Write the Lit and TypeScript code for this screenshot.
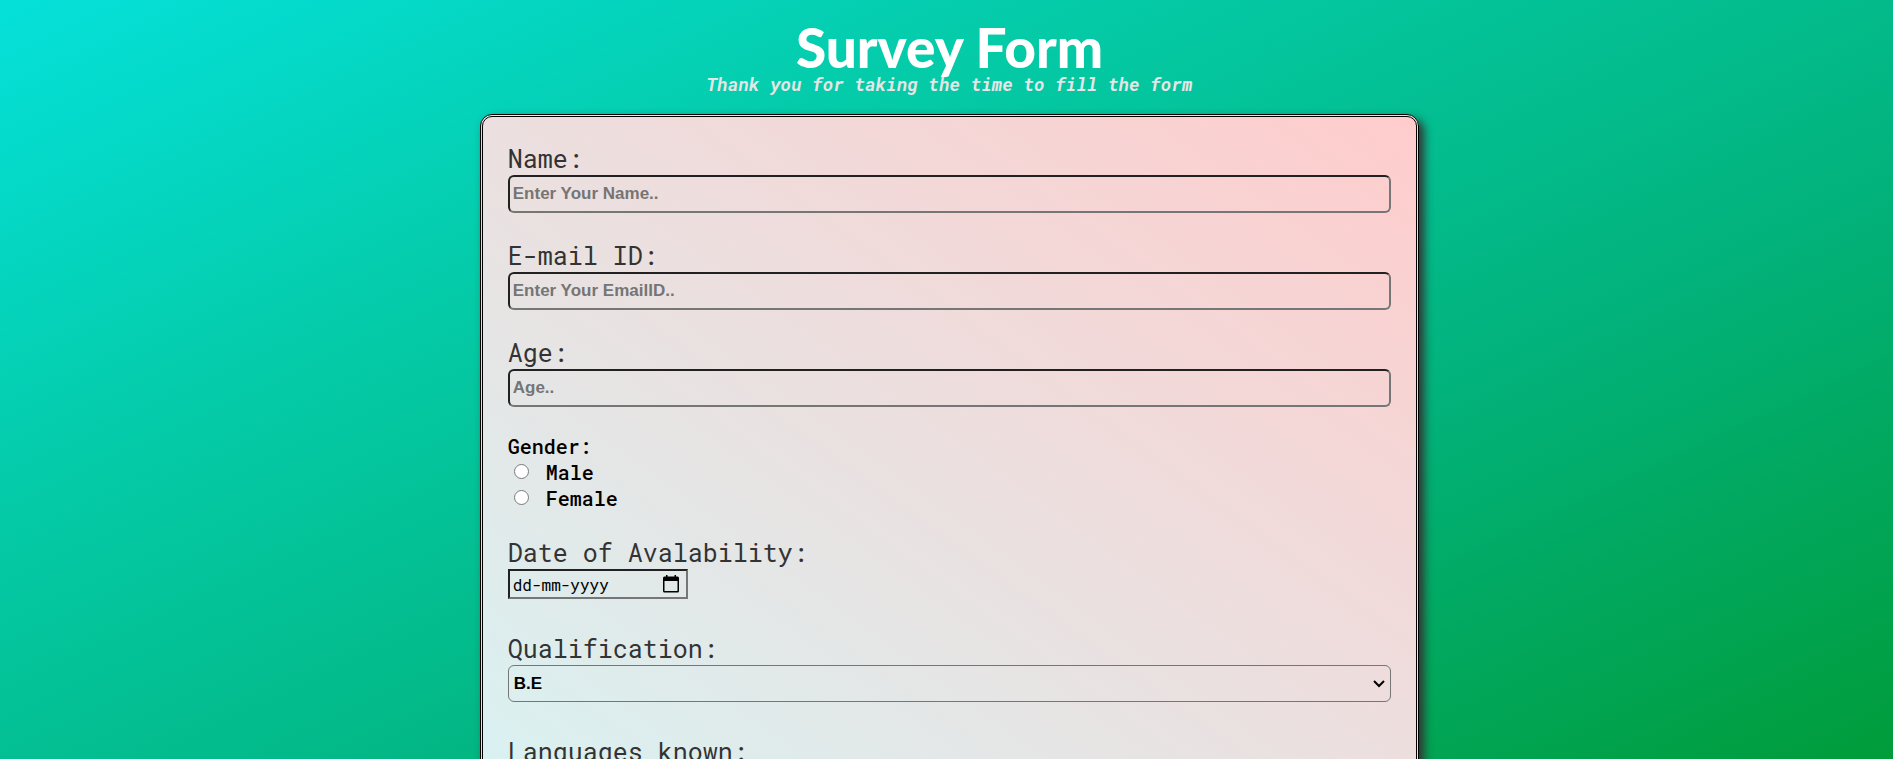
import { LitElement, html, css } from "lit";
import { customElement } from "lit/decorators.js";

@customElement("app-root")
export class AppRoot extends LitElement {
  static styles = css`
    :host {
      display: block;
      height: 100vh;
      overflow: hidden;
      background: linear-gradient(155deg, #05e1da, #04caa6 32%, #02b27b 65%, #009c3a);
      font-family: "Roboto Mono", "DejaVu Sans Mono", monospace;
      font-size: 20px;
      line-height: 26px;
      font-weight: 500;
      color: #000;
    }
    * { box-sizing: border-box; }
    .page { padding: 20px 4px 40px 10px; }
    header { text-align: center; }
    h1 {
      margin: 0;
      font: 900 55px/54px "Comic Sans MS", Lato, sans-serif;
      color: #fff;
    }
    .thanks {
      margin: 0 0 20px;
      font-size: 18px;
      line-height: 20px;
      font-weight: 700;
      font-style: italic;
      color: #e6e6e6;
    }
    form {
      width: 50%;
      margin: 0 auto;
      padding: 25px;
      border: 3px double #000;
      border-radius: 12px;
      background: linear-gradient(to top right, #d9f2f2, #ffcccc);
      box-shadow: 5px 5px 10px #333;
    }
    .field { margin-bottom: 26px; }
    .field.wide { margin-bottom: 33px; }
    .caption {
      display: block;
      font-size: 25px;
      line-height: 33px;
      font-weight: 400;
      color: #333;
    }
    .box {
      display: block;
      width: 100%;
      height: 38px;
      padding: 1px 3px;
      border: 2px inset #767676;
      border-radius: 6px;
      background: transparent;
      font: 700 17px "Liberation Sans", Arial, sans-serif;
      color: #000;
    }
    .box::placeholder { color: #757575; }
    .picker { display: grid; align-items: center; }
    .picker > * { grid-area: 1 / 1; }
    .picker select {
      appearance: none;
      height: 37px;
      border: 1px solid #767676;
      padding: 0 24px 0 5px;
    }
    .picker svg { justify-self: end; margin-right: 6px; pointer-events: none; }
    fieldset { margin: 0 0 25px; padding: 0; border: 0; }
    legend { padding: 0; }
    .choice { display: flex; align-items: center; gap: 17px; padding-left: 6px; }
    .choice input { width: 15px; height: 15px; margin: 0 0 2px; }
    .date {
      display: flex;
      align-items: center;
      width: 180px;
      height: 30px;
      padding: 0 6px 0 3px;
      border: 2px inset #767676;
    }
    .date input {
      flex: 1;
      min-width: 0;
      padding: 0;
      border: 0;
      background: none;
      font: 400 16px "Roboto Mono", monospace;
    }
    .date input::placeholder { color: #000; }
    .date button { display: flex; padding: 0; border: 0; background: none; }
  `;

  render() {
    return html`
      <div class="page">
        <header>
          <h1>Survey Form</h1>
          <p class="thanks">Thank you for taking the time to fill the form</p>
        </header>
        <form>
          <div class="field">
            <label class="caption" for="name">Name:</label>
            <input class="box" id="name" type="text" placeholder="Enter Your Name.." />
          </div>
          <div class="field">
            <label class="caption" for="email">E-mail ID:</label>
            <input class="box" id="email" type="email" placeholder="Enter Your EmailID.." />
          </div>
          <div class="field">
            <label class="caption" for="age">Age:</label>
            <input class="box" id="age" type="number" placeholder="Age.." />
          </div>
          <fieldset>
            <legend>Gender:</legend>
            <label class="choice"><input type="radio" name="gender" value="male" />Male</label>
            <label class="choice"><input type="radio" name="gender" value="female" />Female</label>
          </fieldset>
          <div class="field wide">
            <label class="caption" for="date">Date of Avalability:</label>
            <div class="date">
              <input id="date" type="text" placeholder="dd-mm-yyyy" />
              <button type="button" aria-label="Choose date">
                <svg width="18" height="18" viewBox="0 0 18 18">
                  <path d="M4 0h1.500v1.500h7V0H14v1.500h1.500A1.500 1.500 0 0 1 17 3v13a1.500 1.500 0 0 1-1.500 1.500h-13A1.500 1.500 0 0 1 1 16V3A1.500 1.500 0 0 1 2.500 1.500H4zM2.500 6v10h13V6z" />
                </svg>
              </button>
            </div>
          </div>
          <div class="field wide">
            <label class="caption" for="qualification">Qualification:</label>
            <div class="picker">
              <select class="box" id="qualification"><option>B.E</option></select>
              <svg width="12" height="8" viewBox="0 0 12 8">
                <path d="M1 1l5 5 5-5" fill="none" stroke="#000" stroke-width="2" />
              </svg>
            </div>
          </div>
          <div class="caption">Languages known:</div>
        </form>
      </div>
    `;
  }
}
